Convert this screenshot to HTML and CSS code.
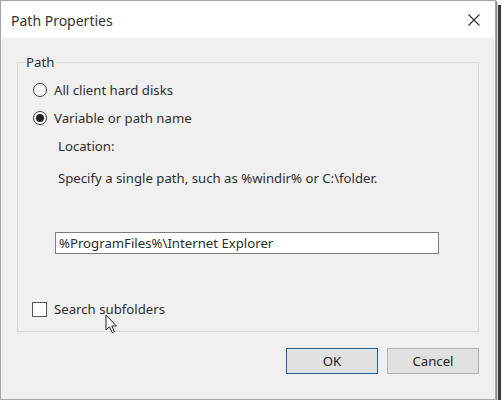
FILE: index.html
```html
<!DOCTYPE html>
<html>
<head>
<meta charset="utf-8">
<link rel="stylesheet" href="styles.css">
</head>
<body>
<div class="window">
  <div class="titlebar">
    <span class="title">Path Properties</span>
    <svg class="close" width="12" height="12" viewBox="0 0 12 12"><path d="M0.5 0.5 L11.5 11.5 M11.5 0.5 L0.5 11.5" stroke="#333" stroke-width="1.2" fill="none"/></svg>
  </div>
  <div class="content">
    <div class="group">
      <span class="group-label">Path</span>
      <div class="row row-first">
        <span class="radio"></span><span>All client hard disks</span>
      </div>
      <div class="row row-second">
        <span class="radio checked"></span><span>Variable or path name</span>
      </div>
      <div class="note location">Location:</div>
      <div class="note specify">Specify a single path, such as %windir% or C:\folder.</div>
      <div class="input">%ProgramFiles%\Internet Explorer</div>
      <div class="row check-row">
        <span class="checkbox"></span><span>Search subfolders</span>
        <svg class="cursor" width="14" height="20" viewBox="0 0 14 20"><path d="M1 1 L1 16 L4.5 12.8 L7.2 18.6 L9.4 17.6 L6.8 12 L11.4 12 Z" fill="#fff" stroke="#222" stroke-width="1" stroke-linejoin="round"/></svg>
      </div>
    </div>
    <div class="buttons">
      <div class="btn btn-default">OK</div>
      <div class="btn">Cancel</div>
    </div>
  </div>
</div>
</body>
</html>
```
FILE: styles.css
```css
html, body {
  margin: 0;
  padding: 0;
  background: #ffffff;
}
body {
  font-family: "Noto Sans", "Open Sans", sans-serif;
  font-size: 13.2px;
  color: #2e2e2e;
}
.window {
  width: 494px;
  height: 398px;
  border: 1px solid #a8a8a8;
  background: #f0f0f0;
  box-shadow: 1px 1px 0 #8c8c8c, 2px 2px 0 #d6d6d6, 5px 5px 0 #3d3d3d;
  display: flex;
  flex-direction: column;
}
.titlebar {
  height: 37px;
  background: #ffffff;
  display: flex;
  align-items: center;
  justify-content: space-between;
  padding: 0 15px 0 10px;
}
.title {
  font-size: 14px;
  color: #333;
  padding-top: 2px;
}
.close {
  display: block;
}
.content {
  padding: 24px 16px 0 16px;
}
.group {
  position: relative;
  border: 1px solid #dadada;
  padding: 17px 0 12px 15px;
}
.group-label {
  position: absolute;
  left: 7px;
  top: -10px;
  padding: 0 2px 0 1px;
  background: #f0f0f0;
  line-height: 18px;
}
.row {
  display: flex;
  align-items: center;
  height: 20px;
  gap: 7px;
  position: relative;
}
.row-second {
  margin-top: 8px;
}
.radio {
  width: 12px;
  height: 12px;
  border: 1px solid #333;
  border-radius: 50%;
  background: #fff;
  display: flex;
  align-items: center;
  justify-content: center;
}
.radio.checked::after {
  content: "";
  width: 8px;
  height: 8px;
  border-radius: 50%;
  background: #222;
}
.note {
  height: 20px;
  line-height: 20px;
  padding-left: 25px;
}
.location {
  margin-top: 8px;
}
.specify {
  margin-top: 12px;
}
.input {
  margin: 44px 0 0 22px;
  width: 379px;
  height: 20px;
  line-height: 20px;
  border: 1px solid #7c7c7c;
  background: #fff;
  padding-left: 3px;
  white-space: nowrap;
}
.check-row {
  margin: 45px 0 0 -1px;
}
.checkbox {
  width: 13px;
  height: 13px;
  border: 1px solid #555;
  background: #fff;
}
.cursor {
  position: absolute;
  left: 73px;
  top: 15px;
}
.buttons {
  display: flex;
  justify-content: flex-end;
  gap: 9px;
  margin-top: 16px;
}
.btn {
  width: 90px;
  height: 24px;
  line-height: 24px;
  text-align: center;
  border: 1px solid #b3b3b3;
  background: #e1e1e1;
  color: #222;
}
.btn-default {
  border-color: #2f5d85;
  box-shadow: inset 0 0 0 1px #d2e8f8;
}
```
